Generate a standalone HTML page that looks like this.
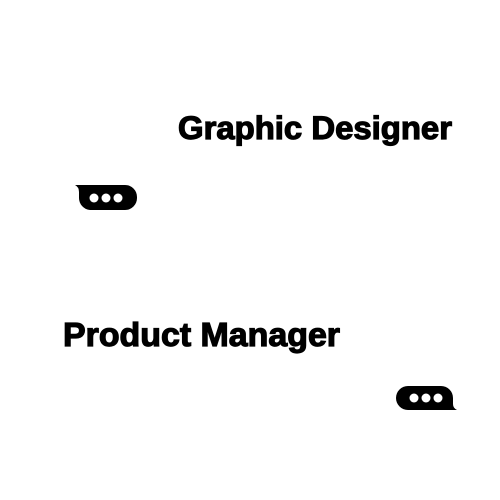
<!DOCTYPE html>
<html><head><style>
html,body{margin:0;padding:0;background:#fff;width:500px;height:500px;overflow:hidden}
</style></head><body>
<svg width="500" height="500" viewBox="0 0 500 500" xmlns="http://www.w3.org/2000/svg">
<text x="178" y="139" font-family="Liberation Sans, sans-serif" font-weight="bold" font-size="32" textLength="274" lengthAdjust="spacingAndGlyphs" fill="#000" stroke="#000" stroke-width="1.2">Graphic Designer</text>
<text x="63" y="346" font-family="Liberation Sans, sans-serif" font-weight="bold" font-size="33" textLength="277" lengthAdjust="spacingAndGlyphs" fill="#000" stroke="#000" stroke-width="1.2">Product Manager</text>
<path d="M75 185 H125 A12 12 0 0 1 137 197 V198 A12 12 0 0 1 125 210 H90 A12 12 0 0 1 79 198 V192 Q79 187 75 185 Z" fill="#000"/>
<circle cx="94" cy="198" r="4.5" fill="#fff"/>
<circle cx="106" cy="198" r="4.5" fill="#fff"/>
<circle cx="118" cy="198" r="4.5" fill="#fff"/>
<path d="M457 410 H408 A12 12 0 0 1 396 398 V398 A12 12 0 0 1 408 386 H441 A12 12 0 0 1 453 398 V404 Q453 408 457 410 Z" fill="#000"/>
<circle cx="414" cy="398" r="4.5" fill="#fff"/>
<circle cx="426" cy="398" r="4.5" fill="#fff"/>
<circle cx="438" cy="398" r="4.5" fill="#fff"/>
</svg>
</body></html>
